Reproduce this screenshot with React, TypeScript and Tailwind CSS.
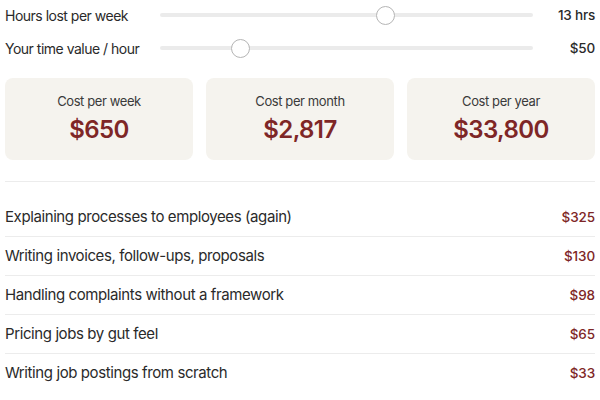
const sliders = [
  { label: "Hours lost per week", value: "13 hrs", pct: 0.61 },
  { label: "Your time value / hour", value: "$50", pct: 0.2 },
];

const totals = [
  { label: "Cost per week", value: "$650" },
  { label: "Cost per month", value: "$2,817" },
  { label: "Cost per year", value: "$33,800" },
];

const tasks = [
  { label: "Explaining processes to employees (again)", cost: "$325" },
  { label: "Writing invoices, follow-ups, proposals", cost: "$130" },
  { label: "Handling complaints without a framework", cost: "$98" },
  { label: "Pricing jobs by gut feel", cost: "$65" },
  { label: "Writing job postings from scratch", cost: "$33" },
];

const Slider = ({ pct }: { pct: number }) => (
  <div className="relative h-[20px] flex-1 flex items-center">
    <div className="h-[4px] w-full rounded-full bg-[#ebebeb]" />
    <div
      className="absolute top-[0.5px] h-[19px] w-[19px] rounded-full border border-[#b5b5b5] bg-white"
      style={{ left: `calc(${pct} * (100% - 19px))` }}
    />
  </div>
);

export default function App() {
  return (
    <div className="w-[600px] h-[400px] bg-white px-[5px] text-[#2a2a2a] font-['Inter',sans-serif] overflow-hidden">
      {/* sliders */}
      <div className="flex flex-col gap-[13px] pt-[5px]">
        {sliders.map((s) => (
          <div key={s.label} className="flex items-center h-[20px]">
            <div className="w-[155px] text-[14px] tracking-[-0.5px]">{s.label}</div>
            <Slider pct={s.pct} />
            <div className="w-[62px] text-right text-[13.5px] font-medium tracking-[-0.2px]">{s.value}</div>
          </div>
        ))}
      </div>

      {/* totals */}
      <div className="mt-[20px] grid grid-cols-3 gap-[13px]">
        {totals.map((t) => (
          <div
            key={t.label}
            className="h-[82px] rounded-[8px] bg-[#f5f3ee] flex flex-col items-center pt-[14px]"
          >
            <div className="text-[13px] text-[#3a3a3a] leading-[18px] tracking-[-0.4px]">{t.label}</div>
            <div className="mt-[5px] text-[24px] font-semibold text-[#7e2626] leading-[30px] tracking-[-0.6px]">
              {t.value}
            </div>
          </div>
        ))}
      </div>

      <div className="mt-[21px] h-px bg-[#ececec]" />

      {/* breakdown */}
      <div className="mt-[16px]">
        {tasks.map((t, i) => (
          <div
            key={t.label}
            className={`flex items-center justify-between h-[39px] ${
              i < tasks.length - 1 ? "border-b border-[#ececec]" : ""
            }`}
          >
            <span className="text-[15px] tracking-[-0.4px]">{t.label}</span>
            <span className="text-[13.5px] font-medium text-[#7e2626] tracking-[-0.1px]">{t.cost}</span>
          </div>
        ))}
      </div>
    </div>
  );
}
